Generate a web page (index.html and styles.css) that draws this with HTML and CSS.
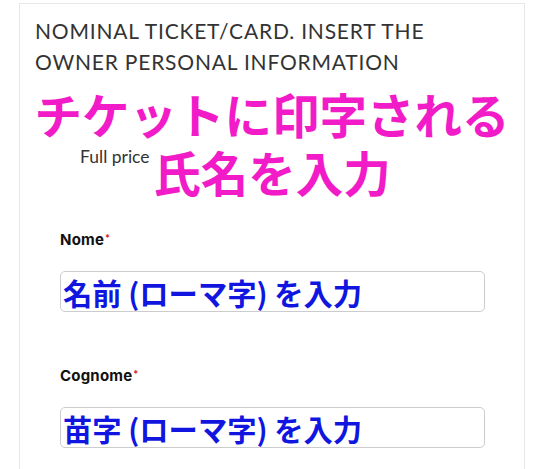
FILE: index.html
```html
<!DOCTYPE html>
<html>
<head>
<meta charset="utf-8">
<link rel="stylesheet" href="styles.css">
</head>
<body>
<div class="card">
  <h2 class="title">NOMINAL TICKET/CARD. INSERT THE OWNER PERSONAL INFORMATION</h2>
  <div class="price">Full price</div>
  <div class="field first">
    <div class="label">Nome<span class="req">*</span></div>
    <div class="input"><span class="hint">名前 (ローマ字) を入力</span></div>
  </div>
  <div class="field">
    <div class="label">Cognome<span class="req">*</span></div>
    <div class="input"><span class="hint">苗字 (ローマ字) を入力</span></div>
  </div>
  <div class="note">チケットに印字される<br>氏名を入力</div>
</div>
</body>
</html>
```

FILE: styles.css
```css
html, body {
  margin: 0;
  padding: 0;
  background: #ffffff;
}
.card {
  position: relative;
  margin: 3px 0 0 19px;
  width: 506px;
  height: 520px;
  border: 1px solid #e7e7e7;
  border-bottom: none;
  box-sizing: border-box;
  padding: 11px 15px 0 15px;
  font-family: "Lato", "Liberation Sans", sans-serif;
}
.title {
  margin: 0;
  font-size: 21px;
  font-weight: 400;
  line-height: 31px;
  letter-spacing: 0.8px;
  color: #333333;
  width: 440px;
}
.price {
  margin: 70px 0 0 45px;
  font-size: 17.5px;
  color: #333333;
  line-height: 20px;
}
.field {
  margin: 0 0 0 25px;
  width: 425px;
}
.field.first {
  margin-top: 64px;
}
.field + .field {
  margin-top: 55px;
}
.label {
  font-family: "Inter", "Liberation Sans", sans-serif;
  font-weight: 700;
  font-size: 15px;
  letter-spacing: 0.2px;
  line-height: 18px;
  color: #111111;
}
.req {
  color: #e0202a;
  font-size: 9px;
  vertical-align: top;
  position: relative;
  top: -2px;
  margin-left: 1px;
}
.input {
  margin-top: 22px;
  height: 41px;
  border: 1.5px solid #cccccc;
  border-radius: 5px;
  box-sizing: border-box;
  display: flex;
  align-items: center;
  padding-left: 2px;
}
.hint {
  font-family: "Noto Sans CJK JP", sans-serif;
  font-weight: 700;
  font-size: 29.3px;
  line-height: 36px;
  color: #1016e0;
  text-shadow: 0 0 2px #fff, 0 0 2px #fff;
}
.note {
  position: absolute;
  top: 81px;
  left: 0;
  right: 0;
  text-align: center;
  font-family: "Noto Sans CJK JP", sans-serif;
  font-weight: 700;
  font-size: 47.5px;
  line-height: 58px;
  color: #f21bc8;
  text-shadow: 0 0 3px #fff, 0 0 3px #fff, 0 0 3px #fff, 0 0 3px #fff;
}
```
